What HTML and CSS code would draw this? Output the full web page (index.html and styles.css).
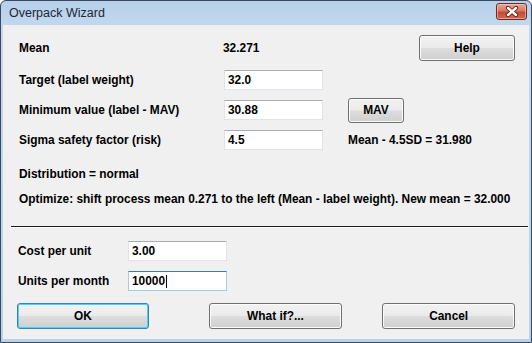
FILE: index.html
```html
<!DOCTYPE html>
<html>
<head>
    <title>Overpack Wizard</title>
    <link rel="stylesheet" href="styles.css">
</head>
<body>
    <div class="window">
        <div class="titlebar">
            <span class="title">Overpack Wizard</span>
            <button class="close-btn" type="button">
                <svg width="14" height="11" viewBox="0 0 14 11">
                    <path d="M3 2 L11 9 M11 2 L3 9" stroke="#5a1d16" stroke-width="4.2" stroke-linecap="round"/>
                    <path d="M3 2 L11 9 M11 2 L3 9" stroke="#ffffff" stroke-width="2.4" stroke-linecap="round"/>
                </svg>
            </button>
        </div>
        <div class="client">
            <div class="params">
                <div class="row row-mean">
                    <span class="label">Mean</span>
                    <span class="value">32.271</span>
                    <button class="btn help-btn" type="button">Help</button>
                </div>
                <div class="row">
                    <label class="label">Target (label weight)</label>
                    <input class="field" type="text" value="32.0">
                </div>
                <div class="row">
                    <label class="label">Minimum value (label - MAV)</label>
                    <input class="field" type="text" value="30.88">
                    <button class="btn mav-btn" type="button">MAV</button>
                </div>
                <div class="row">
                    <label class="label">Sigma safety factor (risk)</label>
                    <input class="field" type="text" value="4.5">
                    <span class="note">Mean - 4.5SD = 31.980</span>
                </div>
            </div>
            <p class="info first">Distribution = normal</p>
            <p class="info">Optimize: shift process mean 0.271 to the left (Mean - label weight). New mean = 32.000</p>
            <div class="divider"></div>
            <div class="costs">
                <div class="row">
                    <label class="cost-label">Cost per unit</label>
                    <input class="field" type="text" value="3.00">
                </div>
                <div class="row">
                    <label class="cost-label">Units per month</label>
                    <div class="field focused">10000<span class="caret"></span></div>
                </div>
            </div>
            <div class="actions">
                <button class="btn ok-btn" type="button">OK</button>
                <button class="btn whatif-btn" type="button">What if?...</button>
                <button class="btn cancel-btn" type="button">Cancel</button>
            </div>
        </div>
    </div>
</body>
</html>
```
FILE: styles.css
```css
body {
    margin: 0;
    font-family: "Liberation Sans", Arial, sans-serif;
    font-size: 11.9px;
    font-weight: bold;
    color: #000;
}

.window {
    width: 532px;
    height: 343px;
    box-sizing: border-box;
    border: 1px solid #3a4a5e;
    border-radius: 6px 6px 0 0;
    background: linear-gradient(#b7cfe9, #c6daef 30px, #b9d1ea);
    padding: 0 2px 3px 2px;
    display: flex;
    flex-direction: column;
}

.titlebar {
    height: 24px;
    display: flex;
    align-items: center;
    padding-left: 6px;
}

.title {
    font-family: "Liberation Sans", Arial, sans-serif;
    font-weight: normal;
    font-size: 12.5px;
    color: #1b2636;
    margin-top: -1px;
}

.close-btn {
    margin-left: auto;
    margin-right: 2px;
    margin-top: -3px;
    width: 31px;
    height: 17px;
    padding: 0;
    border: 1px solid #6e2a22;
    border-radius: 3px;
    background: linear-gradient(#e6a697, #d77a66 45%, #c24a35 55%, #cf6a52);
    box-shadow: inset 0 0 0 1px rgba(255, 220, 210, 0.5);
    display: flex;
    align-items: center;
    justify-content: center;
}

.client {
    flex: 1;
    background: #f0f0f0;
    padding: 10px 14px 0 0;
}

.row {
    display: flex;
    align-items: center;
    height: 30px;
}

.params {
    padding-left: 16px;
}

.params .row-mean {
    height: 26px;
    margin-bottom: 4px;
}

.label {
    width: 205px;
    flex-shrink: 0;
}

.value {
    margin-left: -1px;
}

.field {
    width: 99px;
    height: 20px;
    box-sizing: border-box;
    border: 1px solid #e2e3ea;
    border-top-color: #abadb3;
    background: #fff;
    font-family: inherit;
    font-size: 11.9px;
    font-weight: bold;
    color: #000;
    padding: 0 3px;
    margin: 0;
    display: flex;
    align-items: center;
}

.field.focused {
    border-color: #a8cbe6;
    border-top-color: #3d7bad;
}

.caret {
    display: inline-block;
    width: 1px;
    height: 13px;
    background: #000;
    margin-left: 1px;
}

.btn {
    height: 26px;
    box-sizing: border-box;
    border: 1px solid #707070;
    border-radius: 3px;
    background: linear-gradient(#f2f2f2, #ebebeb 48%, #dddddd 52%, #cfcfcf);
    box-shadow: inset 0 0 0 1px #fbfbfb;
    font-family: inherit;
    font-size: 11.9px;
    font-weight: bold;
    color: #000;
    padding: 0;
}

.help-btn {
    width: 96px;
    margin-left: auto;
}

.mav-btn {
    width: 56px;
    height: 25px;
    margin-left: 25px;
}

.note {
    margin-left: 25px;
}

.info {
    margin: 11px 0 0 16px;
    line-height: 14px;
}

.info.first {
    margin-top: 12px;
}

.divider {
    height: 1px;
    background: #1c1c1c;
    margin: 20px -13px 0 8px;
    border-bottom: 1px solid #ffffff;
}

.costs {
    margin-top: 8px;
    padding-left: 15px;
}

.cost-label {
    width: 110px;
    flex-shrink: 0;
}

.actions {
    display: flex;
    margin-top: 7px;
    padding-left: 14px;
}

.ok-btn {
    width: 132px;
    border-color: #3c7fb1;
    box-shadow: inset 0 0 0 1px #48d2fa;
}

.whatif-btn {
    width: 134px;
    margin-left: 60px;
}

.cancel-btn {
    width: 133px;
    margin-left: 40px;
}
```
